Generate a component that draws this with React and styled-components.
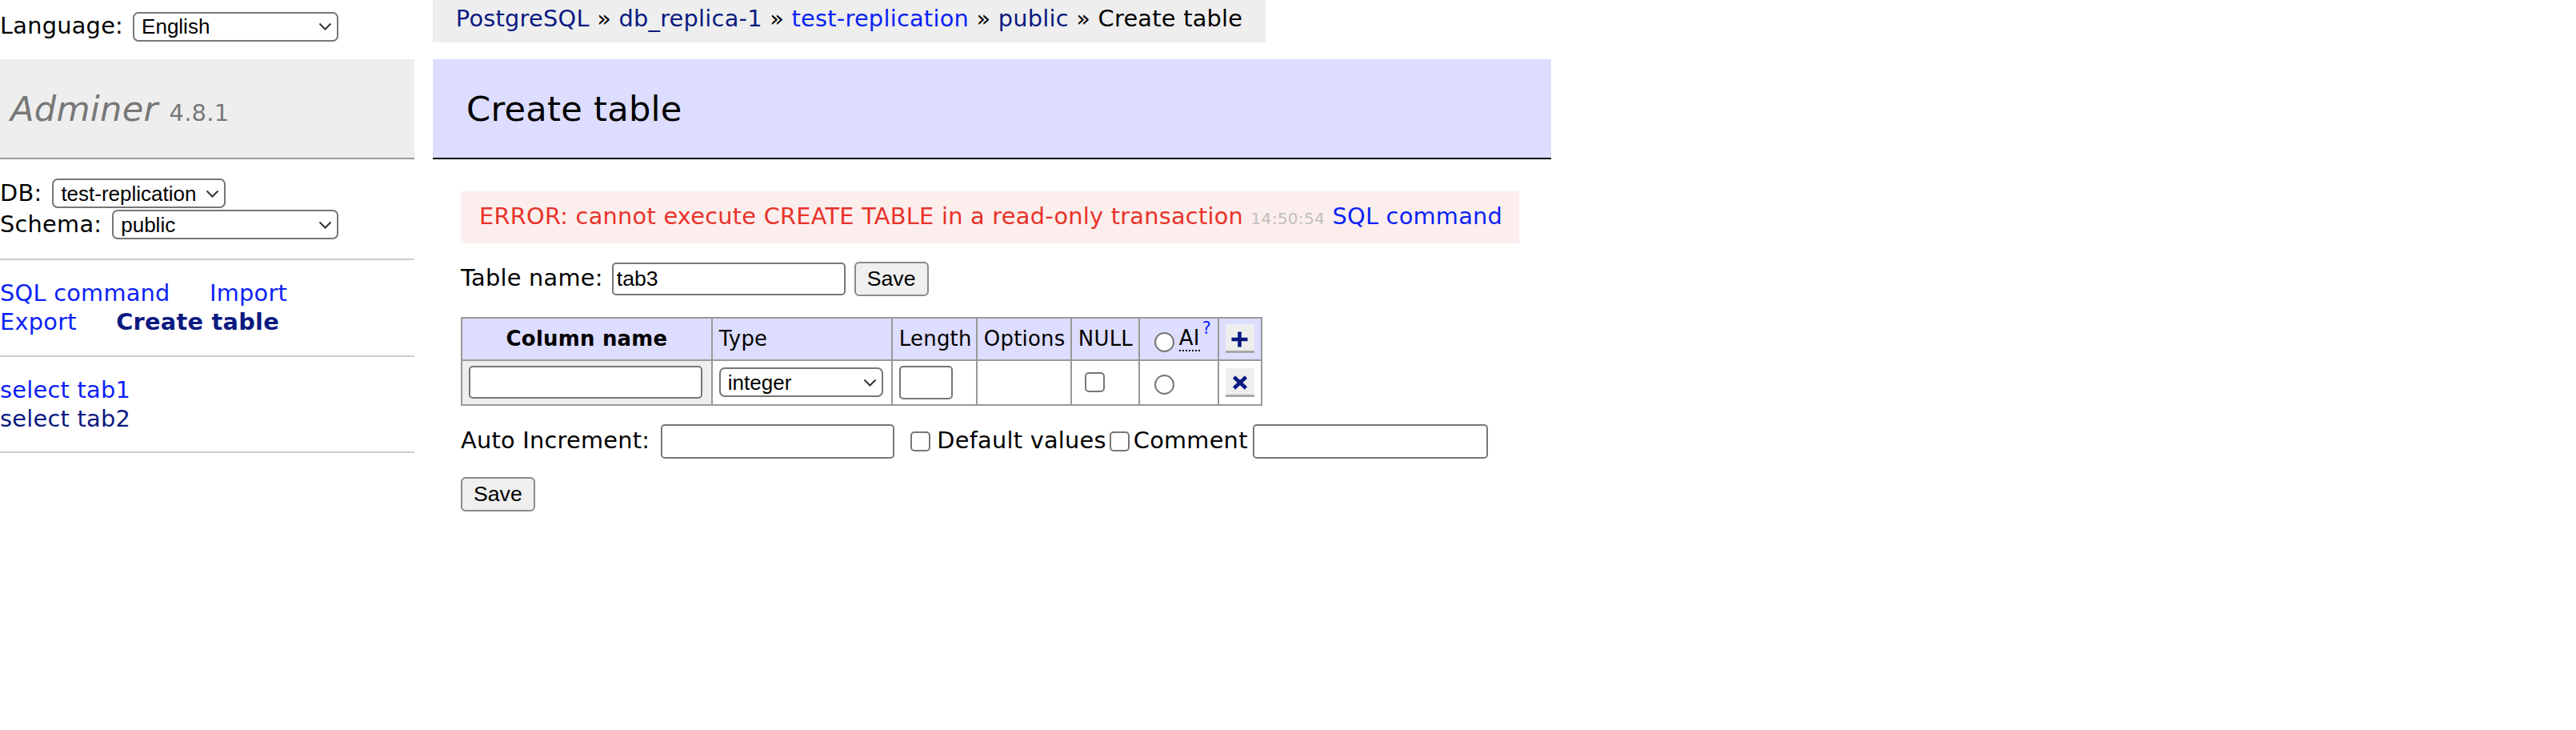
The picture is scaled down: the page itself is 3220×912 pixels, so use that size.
import React from "react";
import styled, { createGlobalStyle } from "styled-components";

const BLUE = "#0a22f5";
const NAVY = "#0b1a80";

const GlobalStyle = createGlobalStyle`
  html, body {
    margin: 0;
    padding: 0;
    background: #fff;
  }
  body {
    color: #000;
    font: 28.8px/1.25 "DejaVu Sans", Verdana, sans-serif;
    letter-spacing: 0.25px;
  }
`;

const Page = styled.div`
  display: flex;
  align-items: flex-start;
  width: max-content;
`;

const Sidebar = styled.div`
  width: 518px;
  flex-shrink: 0;
`;

const LangBar = styled.div`
  height: 74px;
  box-sizing: border-box;
  padding-bottom: 8px;
  display: flex;
  align-items: center;
  gap: 12px;
`;

const Logo = styled.h1`
  margin: 0;
  padding: 34.56px 0 34.56px 13px;
  font-size: 43.2px;
  line-height: 1.25;
  font-weight: normal;
  color: #777;
  background: #eee;
  border-bottom: 2px solid #999;
  white-space: nowrap;
`;

const LogoLink = styled.a`
  color: #777;
  font-style: italic;
  text-decoration: none;
`;

const Version = styled.span`
  font-size: 67%;
  color: #777;
`;

const MenuSection = styled.div`
  margin: 0;
  padding: 23px 29px 23px 0;
  border-bottom: 2px solid #ccc;
`;

const DbRow = styled.div`
  height: 39px;
  display: flex;
  align-items: center;
  gap: 13px;
`;

const Links = styled.p`
  margin: 0;
  padding: 24px 29px 23px 0;
  border-bottom: 2px solid #ccc;
`;

const Link = styled.a`
  color: ${(p) => (p.$visited ? NAVY : BLUE)};
  font-weight: ${(p) => (p.$active ? "bold" : "normal")};
  text-decoration: none;
  white-space: nowrap;
  margin-right: ${(p) => (p.$spaced ? "40px" : "0")};
`;

const TableList = styled.ul`
  list-style: none;
  margin: 0;
  padding: 24px 29px 22px 0;
  border-bottom: 2px solid #ccc;
  white-space: nowrap;
`;

const Main = styled.div`
  margin-left: 23px;
  width: 1398px;
  flex-shrink: 0;
  display: flex;
  flex-direction: column;
  align-items: flex-start;
`;

const Breadcrumb = styled.div`
  background: #eee;
  height: 53px;
  line-height: 46px;
  padding: 0 28.8px;
  white-space: nowrap;
`;

const Current = styled.span`
  color: #000;
`;

const Heading = styled.h2`
  align-self: stretch;
  margin: 21px 0 0;
  padding: 34.56px 42px;
  font-size: 43.2px;
  line-height: 1.25;
  font-weight: normal;
  color: #000;
  background: #ddf;
  border-bottom: 2px solid #000;
`;

const Content = styled.div`
  align-self: stretch;
  padding: 0 40px 40px 35px;
`;

const ErrorBox = styled.div`
  margin-top: 40px;
  padding: 14.4px 23px;
  color: #e8322a;
  background: #fceeed;
  white-space: nowrap;
`;

const Time = styled.span`
  color: #c0c0c0;
  font-size: 70%;
`;

const FormRow = styled.div`
  margin-top: 23px;
  display: flex;
  align-items: center;
  min-height: 43px;
  white-space: nowrap;
`;

const Label = styled.span`
  margin-right: ${(p) => p.$gap || 0}px;
`;

const SelectWrap = styled.span`
  position: relative;
  display: inline-flex;
  flex-shrink: 0;
`;

const Select = styled.select`
  appearance: none;
  width: ${(p) => p.$width}px;
  height: 37px;
  box-sizing: border-box;
  margin: 0;
  padding: 0 30px 0 9px;
  border: 2px solid #767676;
  border-radius: 7px;
  background: #fff;
  color: #000;
  font: 26px "Liberation Sans", Arial, sans-serif;
  letter-spacing: 0;
`;

const Chevron = styled.svg`
  position: absolute;
  right: 8px;
  top: 50%;
  transform: translateY(-50%);
  pointer-events: none;
`;

const TextInput = styled.input`
  width: ${(p) => p.$width}px;
  height: ${(p) => p.$height || 41}px;
  box-sizing: border-box;
  margin: 0 ${(p) => p.$after || 0}px 0 0;
  padding: 0 4px;
  border: 2px solid #767676;
  border-radius: 5px;
  background: #fff;
  color: #000;
  font: 26.67px "Liberation Sans", Arial, sans-serif;
  letter-spacing: 0;
  flex-shrink: 0;
`;

const Button = styled.button`
  height: 43px;
  box-sizing: border-box;
  margin: 0;
  padding: 0 14px;
  border: 2px solid #8a8a8a;
  border-radius: 6px;
  background: #efefef;
  color: #000;
  font: 26.67px "Liberation Sans", Arial, sans-serif;
  letter-spacing: 0;
`;

const SaveRow = styled.div`
  margin-top: 23px;
`;

const Fields = styled.table`
  margin-top: 26px;
  border-collapse: collapse;
  table-layout: fixed;
  width: 1000px;
  font-size: 25.92px;
  line-height: 1.25;
`;

const HeadRow = styled.tr`
  height: 53px;
`;

const BodyRow = styled.tr`
  height: 56px;
`;

const Cell = styled.td`
  border: 2px solid #999;
  padding: 5.2px 7.8px;
  background: ${(p) => p.$bg || "#fff"};
  text-align: left;
  white-space: nowrap;
  vertical-align: middle;
`;

const HeadCell = styled.th`
  border: 2px solid #999;
  padding: 5.2px 13px;
  background: ${(p) => p.$bg || "#ddf"};
  text-align: center;
  font-weight: bold;
  white-space: nowrap;
`;

const Check = styled.input`
  appearance: none;
  display: ${(p) => (p.$block ? "block" : "inline-block")};
  width: 25px;
  height: 25px;
  box-sizing: border-box;
  margin: ${(p) => p.$margin || "0"};
  border: 2px solid #767676;
  border-radius: ${(p) => (p.type === "radio" ? "50%" : "5px")};
  background: #fff;
  flex-shrink: 0;
  vertical-align: ${(p) => p.$valign || "baseline"};
`;

const Abbr = styled.abbr`
  text-decoration: none;
  border-bottom: 2px dotted #000;
`;

const HelpSup = styled.sup`
  font-size: 80%;
  line-height: 0;
  vertical-align: 14px;
  margin-left: 3px;
`;

const IconBox = styled.svg`
  display: block;
`;

const PlusIcon = () => (
  <IconBox width="36" height="36" viewBox="0 0 36 36">
    <rect width="36" height="36" fill="#eeeeee" />
    <rect y="33" width="36" height="3" fill="#a8a8a8" />
    <path d="M17.5 9.5V28.5M7.5 19H27.5" stroke={NAVY} strokeWidth="4.6" fill="none" />
  </IconBox>
);

const CrossIcon = () => (
  <IconBox width="36" height="36" viewBox="0 0 36 36">
    <rect width="36" height="36" fill="#eeeeee" />
    <rect y="33" width="36" height="3" fill="#a8a8a8" />
    <path d="M10.5 11L25.5 25M25.5 11L10.5 25" stroke={NAVY} strokeWidth="4.6" fill="none" />
  </IconBox>
);

const DropDown = ({ width, value, options }) => (
  <SelectWrap>
    <Select $width={width} defaultValue={value}>
      {options.map((o) => (
        <option key={o}>{o}</option>
      ))}
    </Select>
    <Chevron width="17" height="10" viewBox="0 0 17 10">
      <path d="M1.5 1.5L8.5 8.5L15.5 1.5" stroke="#333" strokeWidth="2" fill="none" />
    </Chevron>
  </SelectWrap>
);

const App = () => (
  <>
    <GlobalStyle />
    <Page>
      <Sidebar>
        <LangBar>
          <span>Language:</span>
          <DropDown width={257} value="English" options={["English"]} />
        </LangBar>
        <Logo>
          <LogoLink href="#">Adminer</LogoLink> <Version>4.8.1</Version>
        </Logo>
        <MenuSection>
          <DbRow>
            <span>DB:</span>
            <DropDown width={217} value="test-replication" options={["test-replication"]} />
          </DbRow>
          <DbRow>
            <span>Schema:</span>
            <DropDown width={283} value="public" options={["public"]} />
          </DbRow>
        </MenuSection>
        <Links>
          <Link href="#" $spaced>SQL command</Link>{" "}
          <Link href="#" $spaced>Import</Link>{" "}
          <Link href="#" $spaced>Export</Link>{" "}
          <Link href="#" $spaced $visited $active>Create table</Link>
        </Links>
        <TableList>
          <li><Link href="#">select tab1</Link></li>
          <li><Link href="#" $visited>select tab2</Link></li>
        </TableList>
      </Sidebar>

      <Main>
        <Breadcrumb>
          <Link href="#" $visited>PostgreSQL</Link> »{" "}
          <Link href="#" $visited>db_replica-1</Link> »{" "}
          <Link href="#">test-replication</Link> »{" "}
          <Link href="#" $visited>public</Link> » <Current>Create table</Current>
        </Breadcrumb>
        <Heading>Create table</Heading>
        <Content>
          <ErrorBox>
            ERROR: cannot execute CREATE TABLE in a read-only transaction{" "}
            <Time>14:50:54</Time> <Link href="#">SQL command</Link>
          </ErrorBox>

          <FormRow>
            <Label $gap={11}>Table name:</Label>
            <TextInput $width={292} defaultValue="tab3" $after={11} />
            <Button>Save</Button>
          </FormRow>

          <Fields>
            <colgroup>
              <col style={{ width: 313 }} />
              <col style={{ width: 225 }} />
              <col style={{ width: 106 }} />
              <col style={{ width: 118 }} />
              <col style={{ width: 85 }} />
              <col style={{ width: 99 }} />
              <col style={{ width: 54 }} />
            </colgroup>
            <thead>
              <HeadRow>
                <HeadCell>Column name</HeadCell>
                <Cell $bg="#ddf">Type</Cell>
                <Cell $bg="#ddf">Length</Cell>
                <Cell $bg="#ddf">Options</Cell>
                <Cell $bg="#ddf">NULL</Cell>
                <Cell $bg="#ddf">
                  <Check type="radio" name="ai" $margin="0 6px 0 10px" $valign="-9px" />
                  <Abbr title="Auto Increment">AI</Abbr>
                  <HelpSup><Link href="#">?</Link></HelpSup>
                </Cell>
                <Cell $bg="#ddf"><PlusIcon /></Cell>
              </HeadRow>
            </thead>
            <tbody>
              <BodyRow>
                <Cell $bg="#eee">
                  <TextInput $width={292} $height={41} />
                </Cell>
                <Cell>
                  <DropDown width={205} value="integer" options={["integer"]} />
                </Cell>
                <Cell>
                  <TextInput $width={67} $height={42} />
                </Cell>
                <Cell />
                <Cell>
                  <Check type="checkbox" $block $margin="6px 0 6px 8px" />
                </Cell>
                <Cell>
                  <Check type="radio" name="ai" $block $margin="6px 0 0 10px" />
                </Cell>
                <Cell><CrossIcon /></Cell>
              </BodyRow>
            </tbody>
          </Fields>

          <FormRow>
            <Label $gap={14}>Auto Increment:</Label>
            <TextInput $width={292} $height={43} $after={20} />
            <Check type="checkbox" $margin="0 8px 0 0" />
            <Label $gap={4}>Default values</Label>
            <Check type="checkbox" $margin="0 5px 0 0" />
            <Label $gap={6}>Comment</Label>
            <TextInput $width={294} $height={43} />
          </FormRow>

          <SaveRow>
            <Button>Save</Button>
          </SaveRow>
        </Content>
      </Main>
    </Page>
  </>
);

export default App;
